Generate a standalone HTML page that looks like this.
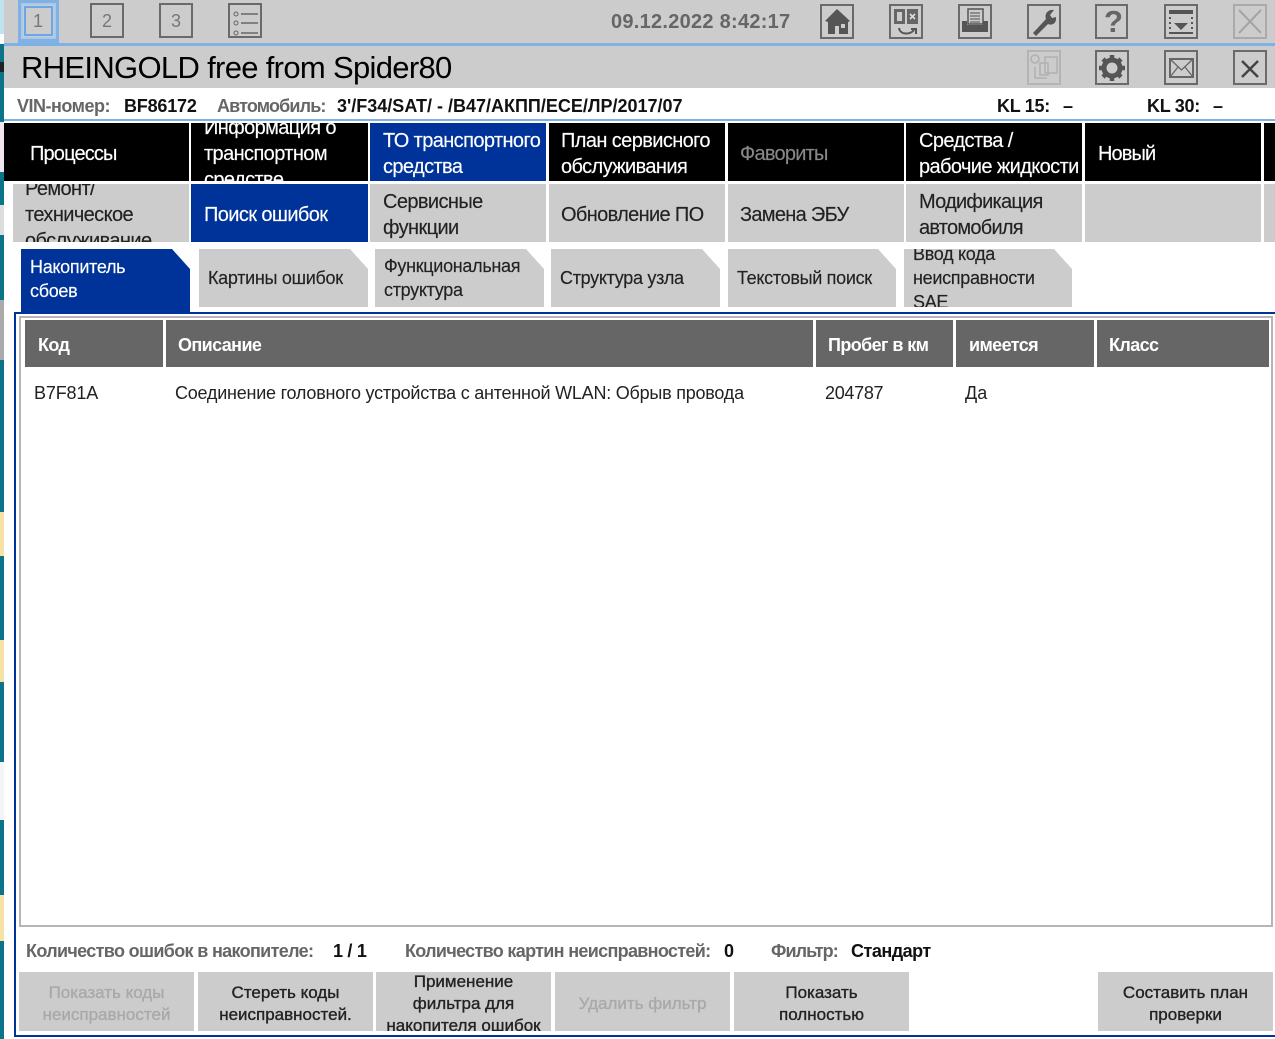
<!DOCTYPE html>
<html><head><meta charset="utf-8"><style>
html,body{margin:0;padding:0;background:#fff}
#r{position:relative;width:1275px;height:1039px;overflow:hidden;background:#fff;font-family:"Liberation Sans",sans-serif;color:#111}
#r div{position:absolute;box-sizing:border-box}
.t{white-space:nowrap;filter:blur(.35px)}
.c{overflow:hidden;font-size:20px;line-height:26px;display:flex;align-items:center;padding:0 0 0 13px}
.c span{display:block;position:relative;top:2px;filter:blur(.35px);white-space:nowrap;letter-spacing:-.6px;-webkit-text-stroke:.15px}
.k{background:#000;color:#fff;top:123px;height:58px}
.g{background:#ccc;color:#222;top:184px;height:58px}
.b{background:#003399!important;color:#fff!important}
.tab{background:#ccc;color:#222;top:249px;height:58px;font-size:18px;line-height:24px;padding-left:9px;clip-path:polygon(0 0,calc(100% - 18px) 0,100% 20px,100% 100%,0 100%)}
.tab span{top:0;letter-spacing:-.3px}
.h{background:#666;color:#fff;top:320px;height:47px;font-size:18px;font-weight:bold;line-height:50px;padding-left:13px;letter-spacing:-.6px}
.h span{filter:blur(.35px)}
.btn{background:#ccc;top:972px;height:59px;font-size:17px;line-height:22px;color:#222;text-align:center;overflow:hidden;display:flex;align-items:center;justify-content:center;-webkit-text-stroke:.35px}
.btn span{display:block;position:relative;top:2px;filter:blur(.35px)}
.dis{color:#a9a9a9}
.ib{width:34px;height:35px;border:2px solid #6a6a6a;filter:blur(.35px)}
svg{position:absolute;left:-2px;top:-2px;width:34px;height:35px}
.v{font-size:18px;font-weight:bold;letter-spacing:-.3px}
.l{font-size:18px;color:#666;font-weight:bold;letter-spacing:-.5px}
</style></head><body><div id="r">
<!-- desktop strip -->
<div style="left:0;top:0;width:4px;height:1039px;background:#0b7488"></div>
<div style="left:0;top:0;width:4px;height:34px;background:#bfe4ee"></div>
<div style="left:0;top:34px;width:4px;height:10px;background:#fff"></div>
<div style="left:0;top:62px;width:4px;height:10px;background:#222"></div>
<div style="left:0;top:122px;width:4px;height:50px;background:#efe6f0"></div>
<div style="left:0;top:205px;width:4px;height:30px;background:#ddd"></div>
<div style="left:0;top:300px;width:4px;height:60px;background:#aaa"></div>
<div style="left:0;top:512px;width:4px;height:44px;background:#f6e2a2"></div>
<div style="left:0;top:640px;width:4px;height:42px;background:#f6e2a2"></div>
<div style="left:0;top:762px;width:4px;height:58px;background:#f4f4f4"></div>
<div style="left:0;top:895px;width:4px;height:46px;background:#f6e2a2"></div>

<!-- toolbar -->
<div style="left:4px;top:0;width:1271px;height:43px;background:#ccc"></div>
<div style="left:4px;top:43px;width:1271px;height:3px;background:#7fb1e5"></div>
<div style="left:18px;top:0;width:41px;height:43px;background:#7fb1e5"></div>
<div style="left:21px;top:3px;width:35px;height:36px;background:#ccc;border:2px solid #a9c8ea"></div>
<div style="left:24px;top:6px;width:29px;height:30px;background:#ccc;border:2px solid #6aa7e6"></div>
<div class="t" style="left:33px;top:11px;font-size:18px;color:#777">1</div>
<div class="ib" style="left:90px;top:3px"></div><div class="t" style="left:102px;top:11px;font-size:18px;color:#777">2</div>
<div class="ib" style="left:159px;top:3px"></div><div class="t" style="left:171px;top:11px;font-size:18px;color:#777">3</div>
<div class="ib" style="left:228px;top:3px"><svg viewBox="0 0 34 35" fill="none" stroke="#666"><circle cx="8" cy="11" r="2"/><circle cx="8" cy="20" r="2"/><circle cx="8" cy="30" r="2"/><path d="M13 11H30M13 20H30M13 30H30" stroke-width="1.6"/></svg></div>
<div class="t" style="left:611px;top:11px;font-size:20px;font-weight:bold;color:#666;letter-spacing:.27px">09.12.2022 8:42:17</div>

<div class="ib" style="left:820px;top:4px"><svg viewBox="0 0 34 35" fill="#555"><path fill-rule="evenodd" d="M17 5L5 17L8 18V30H15V22H19V30H28V18L30 17ZM21 20H25V24H21Z"/></svg></div>
<div class="ib" style="left:889px;top:4px"><svg viewBox="0 0 34 35"><rect x="5" y="5" width="11" height="15" fill="#666"/><rect x="18" y="5" width="11" height="15" fill="#666"/><rect x="8" y="8" width="5" height="9" fill="#ccc"/><path d="M21 10L26 15M26 10L21 15" stroke="#ddd" stroke-width="1.6"/><path d="M10 24C11 31 21 31 25 26M22 25H27V30" fill="none" stroke="#555" stroke-width="2"/></svg></div>
<div class="ib" style="left:958px;top:4px"><svg viewBox="0 0 34 35"><path d="M4 17H9V21H25V17H30V28H4Z" fill="#555"/><rect x="10" y="5" width="15" height="15" fill="#ccc" stroke="#555" stroke-width="1.5"/><path d="M12 9H22M12 12H22M12 15H22M12 18H22" stroke="#666" stroke-width="1.2"/></svg></div>
<div class="ib" style="left:1027px;top:4px"><svg viewBox="0 0 34 35"><path d="M6 29L19 15C17 9 22 5 27 6L23 11L25 14L29 13C30 19 25 22 21 20L9 32Z" fill="#555"/></svg></div>
<div class="ib" style="left:1095px;top:4px;width:33px"><div class="t" style="left:7px;top:-2px;font-size:31px;font-weight:bold;color:#666;line-height:36px">?</div></div>
<div class="ib" style="left:1164px;top:4px"><svg viewBox="0 0 34 35"><rect x="5" y="6" width="24" height="4" fill="#555"/><path d="M10 19H24L17 26Z" fill="#555"/><rect x="5" y="28" width="24" height="2" fill="#555"/><path d="M6 13V26M28 13V26" stroke="#555" stroke-width="2" stroke-dasharray="2 3"/></svg></div>
<div class="ib" style="left:1233px;top:4px;border-color:#aaa"><svg viewBox="0 0 34 35"><path d="M6 6L28 29M28 6L6 29" stroke="#a4a4a4" stroke-width="2"/></svg></div>

<!-- title -->
<div style="left:4px;top:46px;width:1271px;height:42px;background:#ccc"></div>
<div class="t" style="left:21px;top:49px;font-size:31px;line-height:38px;color:#000;letter-spacing:-.68px">RHEINGOLD free from Spider80</div>
<div class="ib" style="left:1027px;top:50px;border-color:#b4b4b4"><svg viewBox="0 0 34 35" fill="none" stroke="#b0b0b0" stroke-width="1.5"><circle cx="8" cy="9" r="4"/><rect x="18" y="7" width="12" height="16"/><rect x="13" y="13" width="8" height="12"/><path d="M8 17V28H20"/></svg></div>
<div class="ib" style="left:1095px;top:50px"><svg viewBox="0 0 34 35"><circle cx="17" cy="18" r="8" fill="none" stroke="#555" stroke-width="5"/><path d="M17 5V31M4 18H30M8 9L26 27M26 9L8 27" stroke="#555" stroke-width="4.5" stroke-dasharray="4 18 4 30"/></svg></div>
<div class="ib" style="left:1164px;top:50px"><svg viewBox="0 0 34 35" fill="none" stroke="#666" stroke-width="2"><rect x="6" y="9" width="23" height="18"/><path d="M6 9L17.500 20L29 9M6 27L14 17M29 27L21 17" stroke-width="1.300"/></svg></div>
<div class="ib" style="left:1233px;top:50px"><svg viewBox="0 0 34 35"><path d="M9 11L25 27M25 11L9 27" stroke="#444" stroke-width="2.500"/></svg></div>

<!-- vehicle info -->
<div class="t l" style="left:17px;top:95px;line-height:22px">VIN-номер:</div>
<div class="t v" style="left:124px;top:95px;line-height:22px;letter-spacing:-.2px">BF86172</div>
<div class="t l" style="left:217px;top:95px;line-height:22px;letter-spacing:-.85px">Автомобиль:</div>
<div class="t v" style="left:337px;top:95px;line-height:22px;letter-spacing:0">3'/F34/SAT/ - /B47/АКПП/ЕСЕ/ЛР/2017/07</div>
<div class="t v" style="left:997px;top:95px;line-height:22px">KL 15:</div>
<div class="t v" style="left:1063px;top:95px;line-height:22px">–</div>
<div class="t v" style="left:1147px;top:95px;line-height:22px">KL 30:</div>
<div class="t v" style="left:1213px;top:95px;line-height:22px">–</div>
<div style="left:4px;top:119px;width:1271px;height:2px;background:#7fb1e5"></div>

<!-- main nav -->
<div class="c k" style="left:4px;width:185px;padding-left:26px"><span style="letter-spacing:-.85px">Процессы</span></div>
<div class="c k" style="left:191px;width:177px"><span>Информация о<br>транспортном<br>средстве</span></div>
<div class="c k b" style="left:370px;width:176px"><span>ТО транспортного<br>средства</span></div>
<div class="c k" style="left:549px;width:176px;padding-left:12px"><span>План сервисного<br>обслуживания</span></div>
<div class="c k" style="left:728px;width:176px;color:#888;padding-left:12px"><span style="letter-spacing:-.75px">Фавориты</span></div>
<div class="c k" style="left:906px;width:176px"><span>Средства /<br>рабочие жидкости</span></div>
<div class="c k" style="left:1085px;width:176px"><span style="letter-spacing:-.9px">Новый</span></div>
<div class="c k" style="left:1264px;width:11px"></div>

<!-- sub nav -->
<div class="c g" style="left:13px;width:176px;padding-left:12px"><span>Ремонт/<br>техническое<br>обслуживание</span></div>
<div class="c g b" style="left:191px;width:177px"><span>Поиск ошибок</span></div>
<div class="c g" style="left:370px;width:176px"><span>Сервисные<br>функции</span></div>
<div class="c g" style="left:549px;width:176px;padding-left:12px"><span style="letter-spacing:-.65px">Обновление ПО</span></div>
<div class="c g" style="left:728px;width:176px;padding-left:12px"><span style="letter-spacing:-.7px">Замена ЭБУ</span></div>
<div class="c g" style="left:906px;width:176px"><span style="letter-spacing:-.75px">Модификация<br>автомобиля</span></div>
<div class="c g" style="left:1085px;width:176px"></div>
<div class="c g" style="left:1264px;width:11px"></div>

<!-- tabs -->
<div class="c tab b" style="left:21px;width:169px;height:63px;padding-bottom:3px"><span>Накопитель<br>сбоев</span></div>
<div class="c tab" style="left:199px;width:169px"><span>Картины ошибок</span></div>
<div class="c tab" style="left:375px;width:169px"><span>Функциональная<br>структура</span></div>
<div class="c tab" style="left:551px;width:169px"><span>Структура узла</span></div>
<div class="c tab" style="left:728px;width:168px"><span>Текстовый поиск</span></div>
<div class="c tab" style="left:904px;width:168px"><span>Ввод кода<br>неисправности<br>SAE</span></div>

<!-- frame -->
<div style="left:14px;top:312px;width:1270px;height:725px;border:2px solid #003399;border-right:0"></div>
<div style="left:19px;top:316px;width:1254px;height:611px;border:2px solid #b5b5b5"></div>
<div class="h" style="left:25px;width:138px"><span>Код</span></div>
<div class="h" style="left:166px;width:647px;padding-left:12px"><span>Описание</span></div>
<div class="h" style="left:816px;width:137px;padding-left:12px"><span>Пробег в км</span></div>
<div class="h" style="left:956px;width:138px"><span>имеется</span></div>
<div class="h" style="left:1097px;width:172px;padding-left:12px"><span>Класс</span></div>
<div class="t" style="left:34px;top:382px;font-size:18px;line-height:22px;color:#222;letter-spacing:-.15px">B7F81A</div>
<div class="t" style="left:175px;top:382px;font-size:18px;line-height:22px;color:#222;letter-spacing:-.23px">Соединение головного устройства с антенной WLAN: Обрыв провода</div>
<div class="t" style="left:825px;top:382px;font-size:18px;line-height:22px;color:#222;letter-spacing:-.3px">204787</div>
<div class="t" style="left:965px;top:382px;font-size:18px;line-height:22px;color:#222">Да</div>

<!-- status -->
<div class="t l" style="left:26px;top:940px;line-height:22px;letter-spacing:-.66px">Количество ошибок в накопителе:</div>
<div class="t v" style="left:333px;top:940px;line-height:22px">1 / 1</div>
<div class="t l" style="left:405px;top:940px;line-height:22px;letter-spacing:-.68px">Количество картин неисправностей:</div>
<div class="t v" style="left:724px;top:940px;line-height:22px">0</div>
<div class="t l" style="left:771px;top:940px;line-height:22px;letter-spacing:-.9px">Фильтр:</div>
<div class="t v" style="left:851px;top:940px;line-height:22px;letter-spacing:-.5px">Стандарт</div>

<!-- buttons -->
<div class="btn dis" style="left:19px;width:175px"><span>Показать коды<br>неисправностей</span></div>
<div class="btn" style="left:198px;width:175px"><span>Стереть коды<br>неисправностей.</span></div>
<div class="btn" style="left:376px;width:175px"><span>Применение<br>фильтра для<br>накопителя ошибок</span></div>
<div class="btn dis" style="left:555px;width:175px"><span>Удалить фильтр</span></div>
<div class="btn" style="left:734px;width:175px"><span>Показать<br>полностью</span></div>
<div class="btn" style="left:1098px;width:175px"><span>Составить план<br>проверки</span></div>
</div></body></html>
